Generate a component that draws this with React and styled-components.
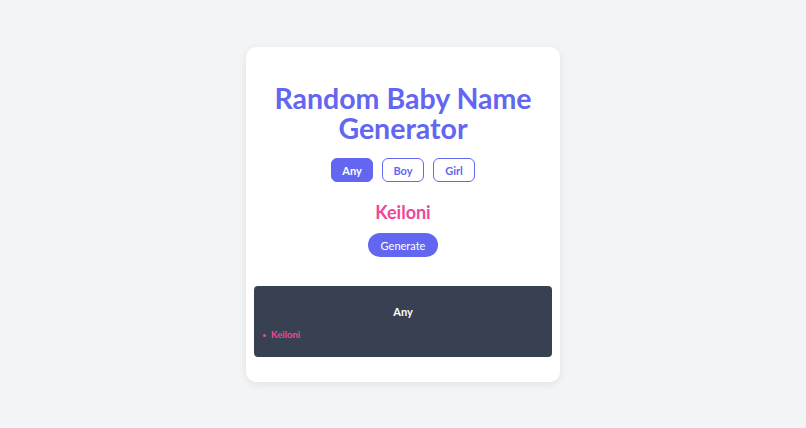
import { useState } from 'react';
import styled, { createGlobalStyle } from 'styled-components';

const GlobalStyle = createGlobalStyle`
  * {
    box-sizing: border-box;
  }

  body {
    margin: 0;
    background-color: #f3f4f6;
    font-family: Lato, 'Noto Sans', sans-serif;
  }
`;

const Page = styled.div`
  min-height: 100vh;
  display: flex;
  justify-content: center;
  padding-top: 47px;
`;

const Card = styled.div`
  width: 314px;
  height: 335px;
  background-color: #fff;
  border-radius: 10px;
  box-shadow: 0 2px 8px rgba(0, 0, 0, 0.08);
  padding: 36px 8px 25px;
  display: flex;
  flex-direction: column;
  align-items: center;
`;

const Title = styled.h1`
  margin: 0;
  font-size: 28.5px;
  line-height: 30px;
  font-weight: 700;
  color: #6366f1;
  text-align: center;
`;

const Toggle = styled.div`
  display: flex;
  gap: 9px;
  margin-top: 15px;
`;

const ToggleButton = styled.button`
  height: 24px;
  min-width: 42px;
  padding: 0 10px;
  border-radius: 6px;
  border: 1.5px solid #6366f1;
  background-color: ${(p) => (p.$active ? '#6366f1' : '#fff')};
  color: ${(p) => (p.$active ? '#fff' : '#6366f1')};
  font-family: inherit;
  font-size: 11px;
  font-weight: 700;
  cursor: pointer;
`;

const Name = styled.div`
  margin-top: 18px;
  font-size: 18px;
  line-height: 24px;
  font-weight: 700;
  color: #ec4899;
`;

const GenerateButton = styled.button`
  margin-top: 9px;
  width: 70px;
  height: 24px;
  border: none;
  border-radius: 12px;
  background-color: #6366f1;
  color: #fff;
  font-family: inherit;
  font-size: 11px;
  cursor: pointer;
`;

const History = styled.div`
  margin-top: 29px;
  width: 100%;
  height: 71px;
  background-color: #374151;
  border-radius: 4px;
  padding: 18px 9px 0;
`;

const HistoryTitle = styled.div`
  text-align: center;
  font-size: 11px;
  line-height: 15px;
  font-weight: 700;
  color: #fff;
`;

const List = styled.ul`
  margin: 8px 0 0;
  padding: 0;
  list-style: none;
`;

const Item = styled.li`
  display: flex;
  align-items: center;
  gap: 5px;
  font-size: 9.5px;
  line-height: 16px;
  font-weight: 700;
  color: #ec4899;

  &::before {
    content: '';
    width: 3px;
    height: 3px;
    border-radius: 50%;
    background-color: #ec4899;
  }
`;

const options = ['Any', 'Boy', 'Girl'];

const App = () => {
  const [gender, setGender] = useState('Any');

  return (
    <Page>
      <GlobalStyle />
      <Card>
        <Title>
          Random Baby Name
          <br />
          Generator
        </Title>
        <Toggle>
          {options.map((o) => (
            <ToggleButton key={o} $active={o === gender} onClick={() => setGender(o)}>
              {o}
            </ToggleButton>
          ))}
        </Toggle>
        <Name>Keiloni</Name>
        <GenerateButton>Generate</GenerateButton>
        <History>
          <HistoryTitle>Any</HistoryTitle>
          <List>
            <Item>Keiloni</Item>
          </List>
        </History>
      </Card>
    </Page>
  );
};

export default App;
